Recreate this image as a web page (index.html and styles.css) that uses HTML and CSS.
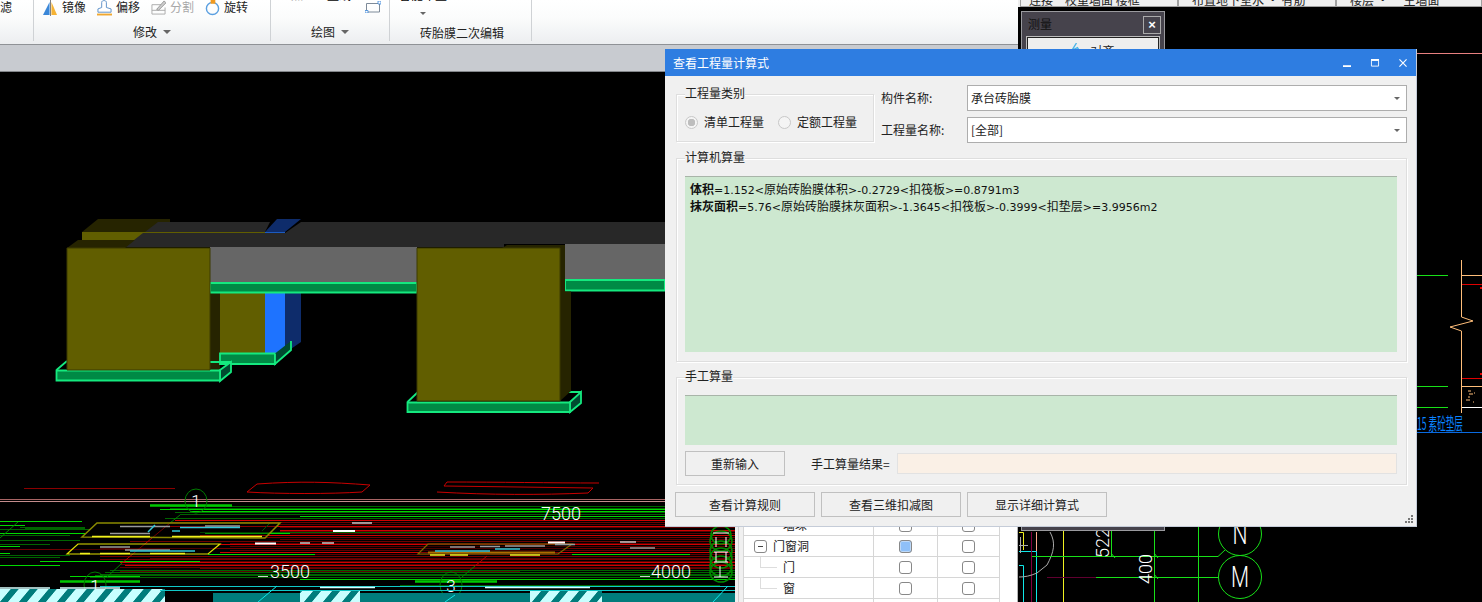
FILE: index.html
```html
<!DOCTYPE html>
<html lang="zh-CN">
<head>
<meta charset="utf-8">
<title>查看工程量计算式</title>
<link rel="stylesheet" href="styles.css">
</head>
<body>
<div class="app">
  <div class="main">
    <div class="ribbon">
      <div class="rgroup g0"><div class="rrow"><span class="tool">滤</span></div></div>
      <div class="rgroup g1">
        <div class="rrow">
          <span class="tool"><svg class="ticon" viewBox="0 0 16 18"><path d="M0 17L7 3V17Z" fill="#3b87d8"/><path d="M9 3L15 17H9Z" fill="#f5b335"/><path d="M8 0V18" stroke="#777"/></svg>镜像</span>
          <span class="tool"><svg class="ticon" viewBox="0 0 16 18"><path d="M5 9V3.500C5 1 10 1 10 3.500V9L15 10.500V14H1V10.500Z" fill="#fff" stroke="#5b8fc7"/><path d="M0 16.500H16" stroke="#f0a830" stroke-width="2"/></svg>偏移</span>
          <span class="tool off"><svg class="ticon" viewBox="0 0 16 18"><path d="M1 6H11M1 6V16H15V9M1 12H15" fill="none" stroke="#aaa"/><path d="M6 11L14 2L16 4L8 12Z" fill="#ccc" stroke="#999"/></svg>分割</span>
          <span class="tool"><svg class="ticon" viewBox="0 0 16 18"><circle cx="8" cy="10" r="6.500" fill="none" stroke="#5a9fe0" stroke-width="1.500"/><path d="M6 0H11V5H6Z" fill="#f09a20"/></svg>旋转</span>
        </div>
        <div class="rlabel">修改<i class="tri"></i></div>
      </div>
      <div class="rgroup g2">
        <div class="rrow draw">
          <span class="clip off">点</span><span class="clip">直线</span>
          <svg class="rect-ic" viewBox="0 0 16 12"><path d="M1.500 2.500H14.500V11H1.500Z" fill="none" stroke="#7d8a99"/><path d="M13 0H16V3H13ZM0 9.500H3V12H0Z" fill="#fff" stroke="#3b87d8" stroke-width=".8"/></svg>
        </div>
        <div class="rlabel">绘图<i class="tri"></i></div>
      </div>
      <div class="rgroup g3">
        <div class="rrow smart">
          <span class="clip">智能布置</span>
          <i class="tri small"></i>
        </div>
        <div class="rlabel low">砖胎膜二次编辑</div>
      </div>
    </div>
    <div class="graybar"></div>
    <div class="viewport">
      <svg class="scene" viewBox="0 72 735 530" aria-hidden="true">
        <defs>
          <pattern id="hatch" width="19" height="12" patternUnits="userSpaceOnUse" patternTransform="skewX(-40)">
            <rect width="19" height="12" fill="#007c7c"/>
            <rect width="11" height="12" fill="#c8ffff"/>
          </pattern>
        </defs>
        <!-- 3D model -->
        <path d="M82 232L98 219H170V232Z" fill="#262400"/>
        <path d="M82 232H145V240H82Z" fill="#615e00"/>
        <path d="M145 232L158 222H270L265 232Z" fill="#282828"/>
        <path d="M125 247L143 233H285L301 222H665V244H504V247Z" fill="#282828"/>
        <path d="M265 232L277 219H301L285 232Z" fill="#0e2c6b"/>
        <path d="M145 232.500H265" stroke="#615e00"/>
        <path d="M265 232.500H285" stroke="#1c5bc0"/>
        <path d="M67 248L78 240H135L125 248Z" fill="#262400"/>
        <path d="M210 247H417V282H210Z" fill="#666"/>
        <path d="M565 244H665V279H565Z" fill="#666"/>
        <path d="M220 293H265V353H220Z" fill="#615e00"/>
        <path d="M265 293H285V353H265Z" fill="#1e73ff"/>
        <path d="M285 293H301V342L285 353Z" fill="#0e2c6b"/>
        <path d="M210 293H220V370H210Z" fill="#262400"/>
        <path d="M210 283H417V292.500H210Z" fill="#008a45" stroke="#14e97f" stroke-width="2"/>
        <path d="M565 280H665V290.500H565Z" fill="#008a45" stroke="#14e97f" stroke-width="2"/>
        <path d="M220 353.500H275V364H220Z" fill="#008a45" stroke="#14e97f" stroke-width="1.800"/>
        <path d="M275 353.500V364L291 350V341" fill="#004a30" stroke="#14e97f" stroke-width="1.800"/>
        <path d="M56.500 370L67 361M220 370L231 362V372L220 381ZM210 362H231" fill="#004a30" stroke="#14e97f" stroke-width="1.800"/>
        <path d="M56.500 370.500H220V380.500H56.500Z" fill="#008a45" stroke="#14e97f" stroke-width="1.800"/>
        <path d="M67 248H210V370H67Z" fill="#615e00" stroke="#3d3b00"/>
        <path d="M407.500 402L418 392M570 402L581 392V403L570 412ZM558 392H581" fill="#004a30" stroke="#14e97f" stroke-width="1.800"/>
        <path d="M407.500 402.500H570V412H407.500Z" fill="#008a45" stroke="#14e97f" stroke-width="1.800"/>
        <path d="M502 248L507 245H565V291.500H571V391L560 401V248Z" fill="#262400"/>
        <path d="M417 248H560V401H417Z" fill="#615e00" stroke="#3d3b00"/>

        <!-- CAD plan in perspective -->
        <g fill="none" class="crisp">
          <path stroke="#8b0000" d="M24 488.500H175"/>
          <path stroke="#a86464" d="M0 499.500H735"/>
          <path stroke="#c48c8c" d="M0 501.500H735"/>
          <path stroke="#5c0000" d="M280 524.500H735M280 527.500H735M280 531.500H735M280 533.500H735M280 539.500H735M230 543.500H735M230 546.500H735M230 550.500H735M230 554.500H735M150 558.500H735M120 561.500H735M120 564.500H735M120 567.500H735M120 571.500H520"/>
          <path stroke="#006400" d="M170 508.500H735M180 514.500H735M165 518.500H735M0 529.500H90M0 540.500H80M0 557.500H60M110 570.500H735M100 574.500H735M90 577.500H735M400 585.500H720M20 527.500H85M25 528.500H85M200 532.500H500M170 506.500H735M175 512.500H735M105 572.500H735M95 575.500H735M0 535.500H70M0 544.500H50M0 555.500H70"/>
          <path stroke="#00d800" d="M190 511.500H735M300 516.500H735M0 521.500H82M0 525.500H25M0 533.500H85M0 546.500H20M0 553.500H10M205 533.500H290M40 561.500H200M0 565.500H60M300 579.500H735M572 554.500H690M208 554.500H315M70 576.500H140M160 509.500H735"/>
          <path stroke="#d00000" d="M175 520.500H735M165 526.500H735M280 530.500H735M200 535.500H735M220 544.500H735M220 552.500H735M120 562.500H735M125 565.500H735"/>
          <path stroke="#700000" d="M170 522.500H735M130 537.500H735M130 541.500H735M0 549.500H130M100 548.500H735M100 556.500H735M100 559.500H735M200 568.500H735"/>
        </g>
        <path d="M150 505.500H232M60 581.500H140M415 581.500H497" stroke="#00c800" stroke-width="2.500" fill="none"/>
        <path d="M180 515L170 523" stroke="#008000"/>
        <path d="M170 523L122 563" stroke="#b00000"/>
        <path d="M122 563L107 577" stroke="#008000"/>
        <path d="M487 556L475 566" stroke="#b00000"/>
        <path d="M475 566L462 577" stroke="#008000"/>
        <path d="M18 522L0 538M270 523L262 531" stroke="#008000"/>
        <path d="M247 492L257 484C300 481 330 482 370 485L362 492C330 494 280 494 247 492Z" fill="none" stroke="#c80000"/>
        <path d="M444 486L447 482C500 482 550 483 599 483M437 492C490 495 540 495 588 493L593 488L444 486" fill="none" stroke="#c80000"/>
        <path d="M82 537L97 523H280L265 538Z" fill="#000" fill-opacity=".35" stroke="#8a8a00" stroke-width="1.500"/>
        <path d="M67 554L78 544H220L208 554Z" fill="#000" fill-opacity=".35" stroke="#e0e000" stroke-width="1.200"/>
        <path d="M418 554L428 544H572L558 554Z" fill="#000" fill-opacity=".35" stroke="#7a6a00" stroke-width="1.200"/>
        <path d="M428 552.500H555" stroke="#b06a00" stroke-width="2"/>
        <g stroke-width="1.500" fill="none">
          <path stroke="#f0f020" d="M92 536.500H150M172 536.500H262M80 553.500H90M100 553.500H130M150 553.500H185M430 555H445M450 555H468M510 555H540"/>
          <path stroke="#9a9a9a" d="M120 526.500H170M205 526H240M110 533.500H150M100 547H130M125 550H170M450 547H475M505 546H545M480 546.500H500M630 548H655M555 544.500H575"/>
          <path stroke="#30c8d8" d="M180 527.500H240M172 531H180M130 551H195M435 551H490M495 549H520M155 525L148 532"/>
          <path stroke="#fff" stroke-width="2" d="M333 531H355M255 543.500H276M548 542.500H565"/>
          <path stroke="#c8c8c8" d="M352 523H372M300 543H310M322 543H334M620 542H636"/>
        </g>
        <g class="axis">
          <ellipse cx="196" cy="501" rx="11" ry="12"/>
          <ellipse cx="95" cy="585" rx="11" ry="13"/>
          <ellipse cx="451" cy="585" rx="11" ry="13"/>
        </g>
        <g class="axis dense">
          <ellipse cx="721" cy="535" rx="10" ry="9"/>
          <ellipse cx="721" cy="541" rx="11" ry="10"/>
          <ellipse cx="721" cy="551" rx="11" ry="10"/>
          <ellipse cx="721" cy="558" rx="11" ry="10"/>
          <ellipse cx="721" cy="566" rx="11" ry="10"/>
          <ellipse cx="721" cy="572" rx="11" ry="10"/>
        </g>
        <path d="M713 533H729M716 537V547M726 537V547M714 552H728M714 562H728M716 552V562M726 552V562M720 566V577M714 577H728" stroke="#fff" fill="none"/>
        <g class="cadtext">
          <text x="196" y="507" text-anchor="middle" class="t14">1</text>
          <text x="95" y="592" text-anchor="middle" class="t14">1</text>
          <text x="451" y="592" text-anchor="middle" class="t14">3</text>
          <text x="561" y="520" text-anchor="middle" class="t17">7500</text>
          <text x="290" y="578" text-anchor="middle" class="t17">3500</text>
          <text x="671" y="578" text-anchor="middle" class="t17">4000</text>
        </g>
        <path d="M258 576.500H268M640 576.500H650" stroke="#ccc"/>
        <rect x="213" y="593" width="522" height="9" fill="#007c7c"/>
        <rect x="0" y="589" width="165" height="13" fill="url(#hatch)"/>
        <rect x="300" y="590" width="60" height="12" fill="url(#hatch)"/>
        <rect x="530" y="590" width="72" height="12" fill="url(#hatch)"/>
        <path d="M100 586.500H735M160 590.500H735" stroke="#10c8c8"/>
        <path d="M0 588H50M60 588H120M320 587.500H375M485 587.500H590" stroke="#d8ffff" stroke-width="1.500"/>
        <path d="M277 586L258 602M455 595L445 602M728 586L713 602" stroke="#10e8e8"/>
      </svg>
      <div class="tree">
        <div class="trow"><span class="tcell name lv2">墙垛</span><span class="tcell"><i class="chk"></i></span><span class="tcell"><i class="chk"></i></span></div>
        <div class="trow"><span class="tcell name"><i class="minus"></i>门窗洞</span><span class="tcell"><i class="chk on"></i></span><span class="tcell"><i class="chk"></i></span></div>
        <div class="trow"><span class="tcell name lv2 leaf">门</span><span class="tcell"><i class="chk"></i></span><span class="tcell"><i class="chk"></i></span></div>
        <div class="trow"><span class="tcell name lv2 leaf">窗</span><span class="tcell"><i class="chk"></i></span><span class="tcell"><i class="chk"></i></span></div>
        <div class="trow"><span class="tcell name"></span><span class="tcell"></span><span class="tcell"></span></div>
      </div>
    </div>
  </div>

  <div class="side">
    <div class="tabs">
      <span class="stab t1">连接　校重墙面 楼框</span>
      <span class="stab t2">布置地下室水 · 有筋</span>
      <span class="stab t3">楼层 · 　主墙面</span>
    </div>
    <div class="cad">
      <svg class="cadsvg" viewBox="1018 7 464 595" aria-hidden="true">
        <g fill="none">
          <path d="M1417 53.500H1482" stroke="#e88080"/>
          <path d="M1417 275.500H1448M1417 386.500H1448M1417 407.500H1448" stroke="#18e018"/>
          <path d="M1461.500 260V317L1473 321L1450 327L1461.500 331V413M1462 275.500H1482M1462 386.500H1482" stroke="#ffbe7a"/>
          <path d="M1462 284.500H1482M1462 378.500H1482" stroke="#e00000"/>
          <path d="M1480 288h2M1480 374h2" stroke="#e00000" stroke-width="2"/>
          <path d="M1462 407.500H1482" stroke="#fff"/>
          <path d="M1468 391h3M1469 394h4M1474 393h1M1466 400h4M1468 397h2M1473 402h1" stroke="#ffbe7a"/>
          <path d="M1417 432.500H1482" stroke="#0a6ae0"/>

          <path d="M1063.500 527V602" stroke="#f0f020"/>
          <path d="M1036.500 532V572" stroke="#ffa890"/>
          <path d="M1036.500 572V602M1019 551.500H1036.500V572M1019 565.500H1023.500V602" stroke="#10e8e8"/>
          <path d="M1031.500 532V602" stroke="#800040"/>
          <path d="M1019 532.500H1023.500V550" stroke="#f0f020"/>
          <path d="M1020.500 537V553M1019 545.500H1028M1050 532C1056 543 1054 552 1047 565C1044 568 1040 570 1037 573C1030 576 1025 577 1019 577" stroke="#aaa"/>
          <path d="M1047 577.500H1096" stroke="#600030"/>
          <path d="M1032 556.500H1218L1225 550M1096 577.500H1218M1111.500 527V556M1154.500 527V602M1198.500 527V602" stroke="#18e018"/>
          <path d="M1111 553l4 5M1154 553l4 5M1154 574l4 5" stroke="#18e018"/>
          <circle cx="1240" cy="534" r="21.500" stroke="#18e018"/>
          <circle cx="1240" cy="577" r="21.500" stroke="#18e018"/>
        </g>
        <text x="1240" y="544" text-anchor="middle" class="letter" textLength="15" lengthAdjust="spacingAndGlyphs">N</text>
        <text x="1240" y="587" text-anchor="middle" class="letter" textLength="18" lengthAdjust="spacingAndGlyphs">M</text>
        <text class="vdim" transform="translate(1109 558) rotate(-90)">522</text>
        <text class="vdim" transform="translate(1152 584) rotate(-90)">400</text>
        <text x="1417" y="430" class="bluetext" textLength="46" lengthAdjust="spacingAndGlyphs">15 素砼垫层</text>
      </svg>
      <div class="measure">
        <div class="m-title"><span>测量</span><span class="m-close">×</span></div>
        <div class="m-btn"><svg class="m-ic" viewBox="0 0 12 12"><path d="M6 0L1 8L7 5L11 11" fill="none" stroke="#4ab4e8" stroke-width="1.500"/></svg>对齐</div>
      </div>
    </div>
  </div>

  <div class="dialog">
    <div class="titlebar">
      <span>查看工程量计算式</span>
      <div class="winbtns">
        <svg class="wb" viewBox="0 0 9 9"><path d="M0 8H9" stroke="#fff" stroke-width="2"/></svg>
        <svg class="wb" viewBox="0 0 9 9"><path d="M.5 1.500H8.500V8H.5Z" fill="none" stroke="#fff"/><path d="M0 1H9" stroke="#fff" stroke-width="2"/></svg>
        <svg class="wb" viewBox="0 0 9 9"><path d="M.5 .5L8.500 8.500M8.500 .5L.5 8.500" stroke="#fff" stroke-width="1.300"/></svg>
      </div>
    </div>
    <div class="dbody">
      <div class="toprow">
        <div class="group typegroup">
          <span class="legend">工程量类别</span>
          <div class="radios">
            <label class="radio"><i class="dot on"></i>清单工程量</label>
            <label class="radio"><i class="dot"></i>定额工程量</label>
          </div>
        </div>
        <div class="fields">
          <div class="field"><span class="flabel">构件名称:</span><div class="combo">承台砖胎膜<i class="tri small"></i></div></div>
          <div class="field"><span class="flabel">工程量名称:</span><div class="combo">[全部]<i class="tri small"></i></div></div>
        </div>
      </div>
      <div class="group autogroup">
        <span class="legend">计算机算量</span>
        <div class="greenbox big">
          <div class="fline"><b>体积</b><span class="num">=1.152&lt;</span>原始砖胎膜体积<span class="num">&gt;-0.2729&lt;</span>扣筏板<span class="num">&gt;=0.8791m3</span></div>
          <div class="fline"><b>抹灰面积</b><span class="num">=5.76&lt;</span>原始砖胎膜抹灰面积<span class="num">&gt;-1.3645&lt;</span>扣筏板<span class="num">&gt;-0.3999&lt;</span>扣垫层<span class="num">&gt;=3.9956m2</span></div>
        </div>
      </div>
      <div class="group handgroup">
        <span class="legend">手工算量</span>
        <div class="greenbox small"></div>
        <div class="handrow">
          <button class="btn reinput" type="button">重新输入</button>
          <span class="hlabel">手工算量结果=</span>
          <div class="result"></div>
        </div>
      </div>
      <div class="actions">
        <button class="btn act" type="button">查看计算规则</button>
        <button class="btn act" type="button">查看三维扣减图</button>
        <button class="btn act" type="button">显示详细计算式</button>
      </div>
    </div>
    <svg class="grip" viewBox="0 0 8 8"><path d="M6 0h2v2H6ZM3 3h2v2H3ZM6 3h2v2H6ZM0 6h2v2H0ZM3 6h2v2H3ZM6 6h2v2H6Z" fill="#777"/></svg>
  </div>
</div>
</body>
</html>
```

FILE: styles.css
```css
* { box-sizing: border-box; }
html, body { margin: 0; padding: 0; background: #000; }
body { font: 12px/16px "Noto Sans CJK SC", "Liberation Sans", sans-serif; color: #000; }
i { display: block; font-style: normal; }

.app { position: relative; display: flex; width: 1482px; height: 602px; overflow: hidden; background: #000; }
.main { width: 1018px; height: 602px; display: flex; flex-direction: column; flex: none; }

/* ribbon */
.ribbon { height: 45px; display: flex; flex: none; background: linear-gradient(#fff, #fbfcfc 40%, #eceef0); border-bottom: 1px solid #8f9296; }
.rgroup { height: 41px; border-right: 1px solid #cfd2d5; flex: none; }
.g0 { width: 34px; }
.g1 { width: 237px; }
.g2 { width: 119px; }
.g3 { width: 142px; }
.rrow { height: 21px; display: flex; align-items: flex-start; overflow: hidden; }
.tool { display: flex; align-items: center; height: 16px; margin-top: -1px; color: #222; }
.g1 .rrow { padding-left: 9px; gap: 11px; }
.g1 .tool { gap: 4px; }
.off { color: #a8a8a8; }
.ticon { width: 15px; height: 17px; flex: none; }
.rlabel { height: 16px; margin-top: 3px; display: flex; justify-content: center; align-items: center; gap: 6px; color: #222; }
.rlabel.low { margin-top: 4px; padding-left: 3px; }
.tri { width: 0; height: 0; border: 4px solid transparent; border-top: 4px solid #666; border-bottom: 0; }
.tri.small { border-width: 3px 3px 0; border-color: #666 transparent transparent; }
.clip { margin-top: -13px; line-height: 16px; }
.draw { padding-left: 20px; gap: 24px; }
.draw .rect-ic { width: 16px; height: 12px; margin: 1px 0 0 -10px; }
.smart { padding-left: 9px; flex-direction: column; align-items: flex-start; }
.smart .tri.small { margin: 9px 0 0 21px; }
.graybar { height: 27px; flex: none; background: #c8cbd0; border-bottom: 1px solid #83868a; }

.viewport { flex: 1; display: flex; min-height: 0; }
.scene { width: 735px; height: 530px; flex: none; display: block; background: #000; }
.crisp { shape-rendering: crispEdges; }
.axis ellipse { fill: none; stroke: #007a00; }
.axis.dense ellipse { stroke: #008a00; stroke-width: 1.500; }
.cadtext text { fill: #fff; font-family: "Roboto", "Liberation Sans", sans-serif; font-weight: 300; }
.t14 { font-size: 17px; }
.t17 { font-size: 18px; }

/* component tree under the dialog */
.tree { width: 283px; flex: none; padding: 443px 0 0 8px; overflow: hidden; border-right: 1px solid #b5b5b5; background: linear-gradient(90deg, #f0f0f0 3px, #cfcfcf 3px 4px, #f0f0f0 4px 8px, #fff 8px); }
.trow { display: grid; grid-template-columns: 131px 64px 62px; width: 257px; height: 21px; border-bottom: 1px solid #d6d6d6; }
.tcell { display: flex; align-items: center; justify-content: center; border-right: 1px solid #d6d6d6; height: 20px; padding-right: 1px; }
.name { justify-content: flex-start; padding-left: 10px; padding-right: 0; position: relative; color: #222; border-left: 1px solid #d6d6d6; }
.lv2 { padding-left: 39px; }
.leaf::before { content: ""; position: absolute; left: 16px; top: 10px; width: 17px; border-top: 1px solid #ddd; }
.leaf::after { content: ""; position: absolute; left: 16px; top: 0; height: 11px; border-left: 1px solid #ddd; }
.minus { width: 13px; height: 13px; margin-right: 6px; border: 1px solid #888; border-radius: 3px; background: linear-gradient(#444, #444) center / 5px 1px no-repeat #fff; }
.chk { width: 13px; height: 13px; border: 1px solid #888; border-radius: 3px; background: #fff; }
.chk.on { background: #8fc0f8; box-shadow: inset 0 0 0 1px #bcd8f8; }

/* right side */
.side { flex: 1; display: flex; flex-direction: column; min-width: 0; }
.tabs { height: 7px; flex: none; display: flex; padding-left: 2px; background: #eee; overflow: hidden; }
.stab { height: 7px; overflow: hidden; background: #eee; border: 1px solid #a0a0a0; border-width: 0 1px 1px; line-height: 0; color: #222; white-space: nowrap; }
.t1 { width: 158px; padding-left: 8px; }
.t2 { width: 158px; padding-left: 13px; }
.t3 { flex: 1; padding-left: 13px; }
.cad { position: relative; flex: 1; min-height: 0; background: #000; }
.cadsvg { display: block; width: 464px; height: 595px; }
.letter { fill: #fff; font: 300 29px "Roboto", "Liberation Sans", sans-serif; }
.vdim { fill: #fff; font: 300 18px "Roboto", "Liberation Sans", sans-serif; }
.bluetext { fill: #0a84ff; font: 400 17px "Noto Sans CJK SC", sans-serif; }
.measure { position: absolute; left: 3px; top: 4px; width: 144px; height: 520px; background: #46434c; border: 1px solid #9a9a9e; padding: 4px; }
.m-title { height: 18px; display: flex; justify-content: space-between; color: #111; padding-left: 2px; line-height: 16px; margin-bottom: 3px; }
.m-close { width: 18px; height: 18px; border: 1px solid #aaa; background: #46434c; color: #fff; font: 700 13px/15px "Liberation Sans", sans-serif; text-align: center; margin-right: -1px; }
.m-btn { height: 30px; display: flex; justify-content: center; gap: 8px; background: #eee; border: 1px solid #222; outline: 1px solid #bbb; padding-top: 5px; margin: 0 1px; color: #222; }
.m-ic { width: 11px; height: 11px; }

/* dialog */
.dialog { position: absolute; left: 665px; top: 49px; width: 752px; height: 478px; background: #f0f0f0; border-right: 1px solid #c5ccd8; border-bottom: 1px solid #c5ccd8; }
.titlebar { height: 27px; background: #2e7de1; color: #fff; display: flex; align-items: center; justify-content: space-between; padding: 0 9px 0 8px; }
.winbtns { display: flex; gap: 20px; }
.wb { width: 8px; height: 8px; display: block; overflow: visible; }
.dbody { padding: 0 9px 0 10px; }
.toprow { display: flex; height: 67px; align-items: flex-start; padding-top: 9px; }
.group { position: relative; border: 1px solid #dedede; box-shadow: inset 1px 1px 0 #fff, 1px 1px 0 #fff; margin-left: 1px; }
.legend { position: absolute; left: 8px; top: -10px; background: #f0f0f0; line-height: 16px; color: #222; }
.typegroup { width: 198px; height: 48px; margin-top: 9px; flex: none; }
.radios { display: flex; padding: 19px 0 0 8px; gap: 14px; }
.radio { display: flex; align-items: center; gap: 6px; color: #222; }
.dot { width: 13px; height: 13px; border: 1px solid #c8c8c8; border-radius: 50%; background: #f4f4f4; }
.dot.on { background: radial-gradient(circle, #bdbdbd 0 3.500px, #f4f4f4 4px); }
.fields { margin-left: 7px; flex: 1; display: flex; flex-direction: column; gap: 6px; }
.field { display: flex; height: 26px; align-items: center; }
.flabel { width: 86px; flex: none; color: #222; }
.combo { flex: 1; height: 26px; border: 1px solid #adadad; background: #fff; display: flex; align-items: center; justify-content: space-between; padding: 0 6px 0 3px; color: #222; }
.autogroup { height: 204px; margin-top: 15px; padding: 17px 9px 0 8px; }
.handgroup { height: 108px; margin-top: 15px; padding: 17px 9px 0 8px; }
.greenbox { background: #cde8d0; border-top: 1px solid #a8b4a8; }
.greenbox.big { height: 176px; padding: 3px 5px; }
.greenbox.small { height: 50px; }
.fline { height: 17px; line-height: 17px; white-space: nowrap; color: #111; }
.fline b { font-weight: 700; }
.num { font: 11px/17px "DejaVu Sans", sans-serif; }
.handrow { display: flex; align-items: center; margin-top: 6px; height: 25px; }
.btn { font: inherit; color: #222; background: #f0f0f0; border: 1px solid #c0c0c0; height: 25px; padding: 0; flex: none; }
.reinput { width: 100px; }
.hlabel { margin-left: 26px; width: 86px; flex: none; color: #222; }
.result { flex: 1; height: 21px; background: #faf0e6; border: 1px solid #e2e2e2; }
.actions { display: flex; gap: 6px; margin-top: 7px; }
.act { width: 140px; }
.grip { position: absolute; right: 3px; bottom: 3px; width: 8px; height: 8px; }
```
